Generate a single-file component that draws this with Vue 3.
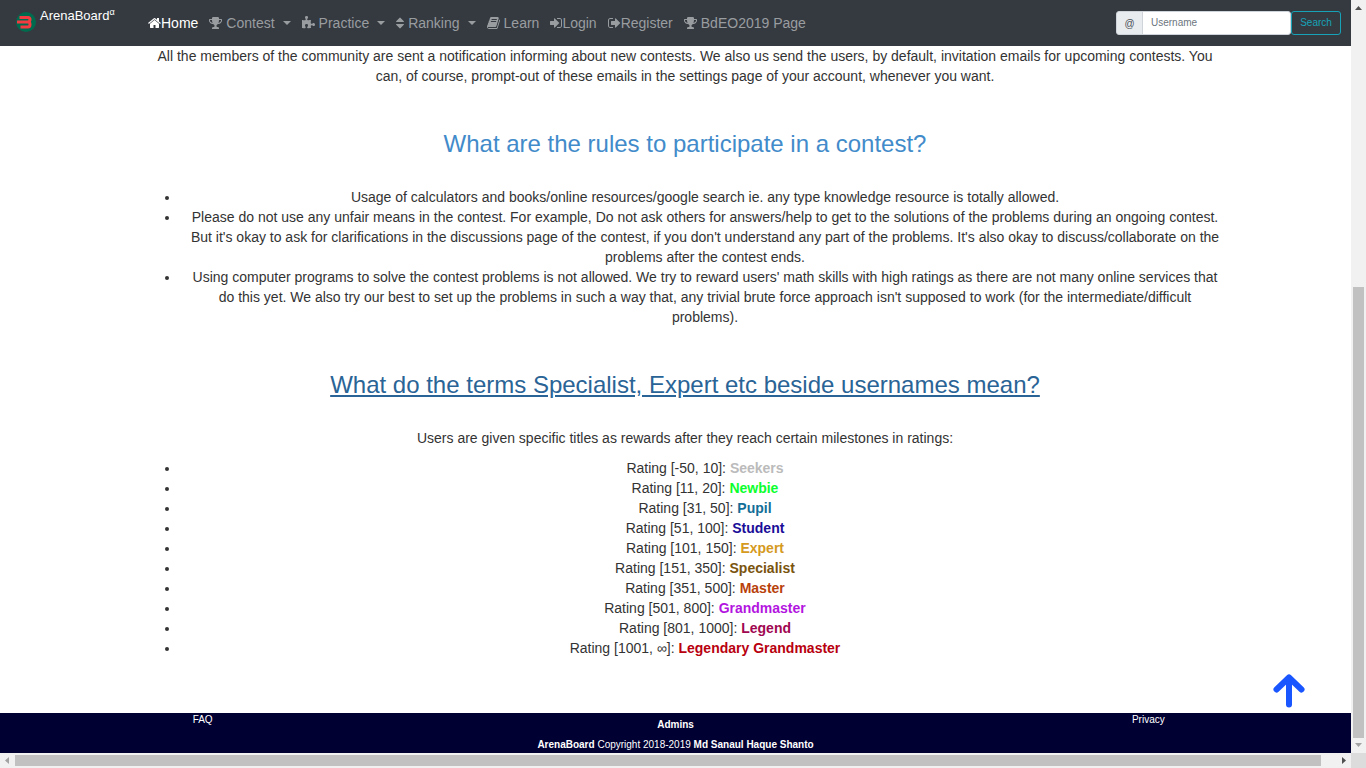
<script setup>
const icons = {
  home: { box: '0 0 1664 1792', w: 13, d: 'M1408 992v480q0 26-19 45t-45 19h-384v-384h-256v384h-384q-26 0-45-19t-19-45v-480q0-1 .5-3t.5-3l575-474 575 474q1 2 1 6zm223-69l-62 74q-8 9-21 11h-3q-13 0-21-7l-692-577-692 577q-12 8-24 7-13-2-21-11l-62-74q-8-10-7-23.5t11-21.5l719-599q32-26 76-26t76 26l244 204v-195q0-14 9-23t23-9h192q14 0 23 9t9 23v408l219 182q10 8 11 21.5t-7 23.5z' },
  trophy: { box: '64 0 1664 1792', w: 13, d: 'M522 883q-74-162-74-371h-256v96q0 78 94.5 162t235.5 113zm1078-275v-96h-256q0 209-74 371 141-29 235.5-113t94.5-162zm128-128v128q0 71-41.5 143t-112 130-173 97.5-215.5 44.5q-42 54-95 95-38 34-52.5 72.5t-14.5 89.5q0 54 30.5 91t97.5 37q75 0 133.5 45.5t58.5 114.5v64q0 14-9 23t-23 9h-832q-14 0-23-9t-9-23v-64q0-69 58.5-114.5t133.5-45.5q67 0 97.5-37t30.5-91q0-51-14.5-89.5t-52.5-72.5q-53-41-95-95-113-5-215.5-44.5t-173-97.5-112-130-41.5-143v-128q0-40 28-68t68-28h288v-96q0-66 47-113t113-47h576q66 0 113 47t47 113v96h288q40 0 68 28t28 68z' },
  puzzle: { box: '64 0 1664 1792', w: 13, d: 'M1728 1098q0 81-44.5 135t-123.5 54q-41 0-77.5-17.5t-59-38-56.5-38-71-17.5q-110 0-110 124 0 39 16 115t15 115v5q-22 0-33 1-34 3-97.5 11.5t-115.5 13.5-98 5q-61 0-103-26.5t-42-83.5q0-37 17.5-71t38-56.5 38-59 17.5-77.5q0-79-54-123.5t-135-44.5q-84 0-143 45.5t-59 127.5q0 43 15 83t33.5 64.5 33.5 53 15 50.5q0 45-46 89-37 35-117 35-95 0-245-24-9-2-27.5-4t-27.5-4l-13-2q-1 0-3-1-2 0-2-1v-1024q2 1 17.5 3.5t34 5 21.5 3.5q150 24 245 24 80 0 117-35 46-44 46-89 0-22-15-50.5t-33.5-53-33.5-64.5-15-83q0-82 59-127.5t144-45.5q80 0 134 44.5t54 123.5q0 41-17.5 77.5t-38 59-38 56.5-17.5 71q0 57 42 83.5t103 26.5q64 0 180-15t163-17v2q-1 2-3.5 17.5t-5 34-3.5 21.5q-24 150-24 245 0 80 35 117 44 46 89 46 22 0 50.5-15t53-33.5 64.5-33.5 83-15q82 0 127.5 59t45.5 143z' },
  sort: { box: '384 0 1024 1792', w: 8, d: 'M1408 1088q0 26-19 45l-448 448q-19 19-45 19t-45-19l-448-448q-19-19-19-45t19-45 45-19h896q26 0 45 19t19 45zm0-384q0 26-19 45t-45 19h-896q-26 0-45-19t-19-45 19-45l448-448q19-19 45-19t45 19l448 448q19 19 19 45z' },
  book: { box: '64 0 1664 1792', w: 13, d: 'M1703 478q40 57 18 129l-275 906q-19 64-76.5 107.5t-122.5 43.5h-923q-77 0-148.5-53.5t-99.5-131.5q-24-67-2-127 0-4 3-27t4-37q1-8-3-21.5t-3-19.5q2-11 8-21t16.5-23.5 16.5-23.5q23-38 45-91.5t30-91.5q3-10 .5-30t-.5-28q3-11 17-28t17-23q21-36 42-92t25-90q1-9-2.5-32t.5-28q4-13 22-30.5t22-22.5q19-26 42.5-84.5t27.5-96.5q1-8-3-25.5t-2-26.5q2-8 9-18t18-23 17-21q8-12 16.5-30.5t15-35 16-36 19.5-32 26.5-23.5 36-11.5 47.5 5.5l-1 3q38-9 51-9h761q74 0 114 56t18 130l-274 906q-36 119-71.5 153.5t-128.5 34.5h-869q-27 0-38 15-11 16-1 43 24 70 144 70h923q29 0 56-15.5t35-41.5l300-987q7-22 5-57 38 15 59 43zm-1064 2q-4 13 2 22.5t20 9.5h608q13 0 25.5-9.5t16.5-22.5l21-64q4-13-2-22.5t-20-9.5h-608q-13 0-25.5 9.5t-16.5 22.5zm-83 256q-4 13 2 22.5t20 9.5h608q13 0 25.5-9.5t16.5-22.5l21-64q4-13-2-22.5t-20-9.5h-608q-13 0-25.5 9.5t-16.5 22.5z' },
  signIn: { box: '128 0 1536 1792', w: 12, d: 'M1312 896q0 26-19 45l-544 544q-19 19-45 19t-45-19-19-45v-288h-448q-26 0-45-19t-19-45v-384q0-26 19-45t45-19h448v-288q0-26 19-45t45-19 45 19l544 544q19 19 19 45zm352-352v704q0 119-84.5 203.5t-203.5 84.5h-320q-13 0-22.5-9.5t-9.5-22.5q0-4-1-20t-.5-26.5 3-23.5 10-19.5 20.5-6.5h320q66 0 113-47t47-113v-704q0-66-47-113t-113-47h-312l-11.5-1-11.5-3-8-5.5-7-9-2-13.5q0-4-1-20t-.5-26.5 3-23.5 10-19.5 20.5-6.5h320q119 0 203.5 84.5t84.5 203.5z' },
  signOut: { box: '64 0 1664 1792', w: 13, d: 'M704 1440q0 4 1 20t.5 26.5-3 23.5-10 19.5-20.5 6.5h-320q-119 0-203.5-84.5t-84.5-203.5v-704q0-119 84.5-203.5t203.5-84.5h320q13 0 22.5 9.5t9.5 22.5q0 4 1 20t.5 26.5-3 23.5-10 19.5-20.5 6.5h-320q-66 0-113 47t-47 113v704q0 66 47 113t113 47h312l11.5 1 11.5 3 8 5.5 7 9 2 13.5zm928-544q0 26-19 45l-544 544q-19 19-45 19t-45-19-19-45v-288h-448q-26 0-45-19t-19-45v-384q0-26 19-45t45-19h448v-288q0-26 19-45t45-19 45 19l544 544q19 19 19 45z' }
}

const links = [
  { text: 'Home', icon: 'home', active: true },
  { text: 'Contest', icon: 'trophy', spaced: true, menu: true },
  { text: 'Practice', icon: 'puzzle', spaced: true, menu: true },
  { text: 'Ranking', icon: 'sort', spaced: true, menu: true },
  { text: 'Learn', icon: 'book', spaced: true },
  { text: 'Login', icon: 'signIn' },
  { text: 'Register', icon: 'signOut' },
  { text: 'BdEO2019 Page', icon: 'trophy', spaced: true }
]

const rules = [
  'Usage of calculators and books/online resources/google search ie. any type knowledge resource is totally allowed.',
  "Please do not use any unfair means in the contest. For example, Do not ask others for answers/help to get to the solutions of the problems during an ongoing contest. But it's okay to ask for clarifications in the discussions page of the contest, if you don't understand any part of the problems. It's also okay to discuss/collaborate on the problems after the contest ends.",
  "Using computer programs to solve the contest problems is not allowed. We try to reward users' math skills with high ratings as there are not many online services that do this yet. We also try our best to set up the problems in such a way that, any trivial brute force approach isn't supposed to work (for the intermediate/difficult problems)."
]

const ranks = [
  { range: '-50, 10', title: 'Seekers', tone: 'seekers' },
  { range: '11, 20', title: 'Newbie', tone: 'newbie' },
  { range: '31, 50', title: 'Pupil', tone: 'pupil' },
  { range: '51, 100', title: 'Student', tone: 'student' },
  { range: '101, 150', title: 'Expert', tone: 'expert' },
  { range: '151, 350', title: 'Specialist', tone: 'specialist' },
  { range: '351, 500', title: 'Master', tone: 'master' },
  { range: '501, 800', title: 'Grandmaster', tone: 'grandmaster' },
  { range: '801, 1000', title: 'Legend', tone: 'legend' },
  { range: '1001, ∞', title: 'Legendary Grandmaster', tone: 'legendary' }
]
</script>

<template>
  <div class="window">
    <div class="page">
      <nav class="navbar">
        <a class="brand" href="#">
          <svg class="logo" viewBox="0 0 20 20" aria-hidden="true">
            <circle cx="10" cy="10" r="10" fill="#006a4e" />
            <path d="M3.500 5.500H12Q14 5.500 14 7.500T12 10Q14 10 14 12.500T12 15H4.500M1 10H12" fill="none" stroke="#f43a41" stroke-width="3" />
          </svg>
          <span>ArenaBoard<sup>α</sup></span>
        </a>
        <ul class="links">
          <li v-for="link in links" :key="link.text">
            <a href="#" :class="{ active: link.active, spaced: link.spaced }">
              <svg :width="icons[link.icon].w" height="14" :viewBox="icons[link.icon].box" aria-hidden="true"><path :d="icons[link.icon].d" /></svg>
              <span>{{ link.text }}</span>
              <i v-if="link.menu" class="caret"></i>
            </a>
          </li>
        </ul>
        <form class="search" @submit.prevent>
          <label for="username">@</label>
          <input id="username" type="text" placeholder="Username" />
          <button type="submit">Search</button>
        </form>
      </nav>

      <main class="content">
        <p>All the members of the community are sent a notification informing about new contests. We also us send the users, by default, invitation emails for upcoming contests. You can, of course, prompt-out of these emails in the settings page of your account, whenever you want.</p>
        <h3><a href="#">What are the rules to participate in a contest?</a></h3>
        <ul>
          <li v-for="rule in rules" :key="rule">{{ rule }}</li>
        </ul>
        <h3><a class="hovered" href="#">What do the terms Specialist, Expert etc beside usernames mean?</a></h3>
        <p class="intro">Users are given specific titles as rewards after they reach certain milestones in ratings:</p>
        <ul>
          <li v-for="rank in ranks" :key="rank.title">Rating [{{ rank.range }}]: <b :class="rank.tone">{{ rank.title }}</b></li>
        </ul>
      </main>

      <footer class="footer">
        <div><a href="#">FAQ</a></div>
        <div class="middle">
          <p><a href="#"><b>Admins</b></a></p>
          <p><b>ArenaBoard</b> Copyright 2018-2019 <b>Md Sanaul Haque Shanto</b></p>
        </div>
        <div><a href="#">Privacy</a></div>
      </footer>

      <button class="to-top" type="button" aria-label="Back to top">
        <svg width="32" height="34" viewBox="0 0 32 34" aria-hidden="true"><path d="M16 30.500V4M3.500 15.500L16 3.500L28.500 15.500" /></svg>
      </button>
    </div>

    <div class="bar vertical" aria-hidden="true">
      <svg width="15" height="15" viewBox="0 0 15 15"><path d="M4 10h7L7.500 6z" fill="#505050" /></svg>
      <div class="track"><div class="thumb"></div></div>
      <svg width="15" height="15" viewBox="0 0 15 15"><path d="M4 5h7L7.500 9z" fill="#a3a3a3" /></svg>
    </div>
    <div class="bar horizontal" aria-hidden="true">
      <svg width="15" height="15" viewBox="0 0 15 15"><path d="M9 4v7L5 7.500z" fill="#a3a3a3" /></svg>
      <div class="track"><div class="thumb"></div></div>
      <svg width="15" height="15" viewBox="0 0 15 15"><path d="M6 4v7L10 7.500z" fill="#505050" /></svg>
    </div>
    <div class="corner"></div>
  </div>
</template>

<style>
body { margin: 0; }
</style>

<style scoped>
.window {
  display: grid;
  grid-template: minmax(0, 1fr) 15px / minmax(0, 1fr) 15px;
  height: 100vh;
  font: 14px/20px "Liberation Sans", Arial, sans-serif;
  color: #333;
  background: #fff;
}
.window * { box-sizing: border-box; }
a { text-decoration: none; color: inherit; }
ul, p, h3 { margin: 0; }

.page {
  position: relative;
  display: flex;
  flex-direction: column;
  overflow: hidden;
}

.navbar {
  flex: none;
  display: flex;
  align-items: center;
  min-height: 46px;
  padding: 0 10px 0 16px;
  background: #343a40;
}
.brand {
  display: flex;
  width: 132px;
  align-self: flex-start;
  padding-top: 6px;
  color: #fff;
  font-size: 13px;
}
.brand span { padding-left: 4px; }
.brand sup { font-size: 9px; line-height: 0; }
.logo { width: 20px; height: 20px; margin-top: 6px; }
.links {
  display: flex;
  flex: 1;
  gap: 11px;
  padding: 0;
  list-style: none;
}
.links a {
  display: flex;
  align-items: center;
  color: #9a9da0;
  white-space: nowrap;
}
.links a.active { color: #fff; }
.links svg { fill: currentColor; }
.links .spaced span { padding-left: 4px; }
.caret {
  margin-left: 8px;
  border: 4px solid transparent;
  border-top-color: currentColor;
  border-bottom: 0;
}
.search {
  display: flex;
  height: 24px;
  font-size: 10px;
}
.search label {
  width: 27px;
  border: 1px solid #ced4da;
  border-radius: 3px 0 0 3px;
  background: #e9ecef;
  color: #495057;
  line-height: 23px;
  text-align: center;
}
.search input {
  width: 149px;
  margin-left: -1px;
  padding: 0 8px;
  border: 1px solid #ced4da;
  border-radius: 0 3px 3px 0;
  background: #fff;
  font: inherit;
}
.search input::placeholder { color: #6c757d; }
.search button {
  width: 50px;
  padding: 0;
  border: 1px solid #17a2b8;
  border-radius: 3px;
  background: transparent;
  color: #17a2b8;
  font: inherit;
}

.content {
  flex: 1;
  padding: 0 121px 0 140px;
  text-align: center;
}
.content h3 {
  padding: 44px 0 30px;
  color: #428bca;
  font-size: 24px;
  font-weight: 400;
  line-height: 27px;
}
.content .hovered { color: #2a6496; text-decoration: underline; }
.content p, .content li { padding: 0 5px; }
.content ul { padding-left: 40px; }
.content .intro { padding-bottom: 10px; }
.seekers { color: #bbb; }
.newbie { color: #0cff2e; }
.pupil { color: #136e97; }
.student { color: #1a0d98; }
.expert { color: #d59a1e; }
.specialist { color: #7a540e; }
.master { color: #b8410b; }
.grandmaster { color: #b315e0; }
.legend { color: #a00750; }
.legendary { color: #b8000f; }

.footer {
  flex: none;
  display: grid;
  grid-template-columns: 3fr 4fr 3fr;
  min-height: 40px;
  background: #000033;
  color: #fff;
  font-size: 10px;
  line-height: 14px;
  text-align: center;
}
.middle {
  display: grid;
  gap: 4px;
  padding-top: 4px;
  line-height: 16px;
}

.to-top {
  position: absolute;
  right: 46px;
  bottom: 45px;
  padding: 0;
  border: 0;
  background: none;
}
.to-top svg {
  display: block;
  fill: none;
  stroke: #1a56ff;
  stroke-width: 6;
  stroke-linecap: round;
  stroke-linejoin: round;
}

.bar { display: flex; background: #f1f1f1; }
.bar svg { flex: none; display: block; }
.vertical { flex-direction: column; }
.track { display: flex; flex: 1; }
.thumb { background: #c1c1c1; }
.vertical .track { flex-direction: column; justify-content: flex-end; padding: 0 2px; }
.vertical .thumb { height: 62.400%; }
.horizontal .track { padding: 2px 0; }
.horizontal .thumb { width: 98.900%; }
.corner { background: #dcdcdc; }
</style>
